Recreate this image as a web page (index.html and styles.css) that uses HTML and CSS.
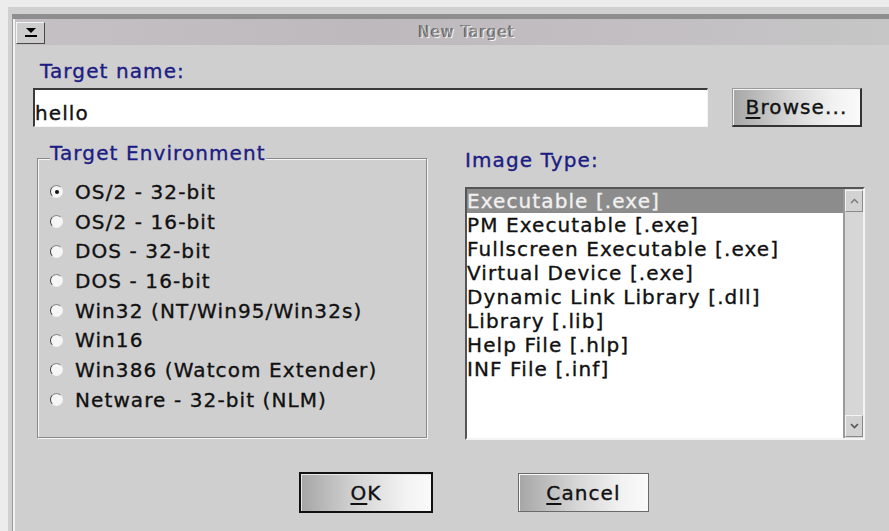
FILE: index.html
```html
<!DOCTYPE html>
<html lang="en">
<head>
<meta charset="utf-8">
<title>New Target</title>
<link rel="stylesheet" href="styles.css">
</head>
<body>
<div class="window">
  <div class="frame">
    <div class="inner">
      <div class="titlebar">
        <button class="sysmenu" aria-label="System menu">
          <svg width="14" height="10" viewBox="0 0 14 10"><polygon points="2,0 12,0 7,5" fill="#000"/><rect x="1" y="7" width="12" height="2" fill="#000"/></svg>
        </button>
        <div class="title">New Target</div>
      </div>
      <div class="client">
        <div class="field-label name-label">Target name:</div>
        <div class="input-row">
          <div class="textbox">hello</div>
          <button class="btn browse"><u>B</u>rowse...</button>
        </div>
        <div class="main-row">
          <fieldset class="group">
            <legend>Target Environment</legend>
            <label class="radio"><span class="dot checked"></span>OS/2 - 32-bit</label>
            <label class="radio"><span class="dot"></span>OS/2 - 16-bit</label>
            <label class="radio"><span class="dot"></span>DOS - 32-bit</label>
            <label class="radio"><span class="dot"></span>DOS - 16-bit</label>
            <label class="radio"><span class="dot"></span>Win32 (NT/Win95/Win32s)</label>
            <label class="radio"><span class="dot"></span>Win16</label>
            <label class="radio"><span class="dot"></span>Win386 (Watcom Extender)</label>
            <label class="radio"><span class="dot"></span>Netware - 32-bit (NLM)</label>
          </fieldset>
          <div class="image-col">
            <div class="field-label">Image Type:</div>
            <div class="listbox">
              <ul class="items">
                <li class="selected">Executable [.exe]</li>
                <li>PM Executable [.exe]</li>
                <li>Fullscreen Executable [.exe]</li>
                <li>Virtual Device [.exe]</li>
                <li>Dynamic Link Library [.dll]</li>
                <li>Library [.lib]</li>
                <li>Help File [.hlp]</li>
                <li>INF File [.inf]</li>
              </ul>
              <div class="scrollbar">
                <div class="sb-btn"><svg width="9" height="6" viewBox="0 0 9 6"><polyline points="1,5 4.5,1.5 8,5" fill="none" stroke="#777" stroke-width="1.4"/></svg></div>
                <div class="sb-btn"><svg width="9" height="6" viewBox="0 0 9 6"><polyline points="1,1 4.5,4.5 8,1" fill="none" stroke="#555" stroke-width="1.6"/></svg></div>
              </div>
            </div>
          </div>
        </div>
        <div class="button-row">
          <button class="btn ok"><u>O</u>K</button>
          <button class="btn cancel"><u>C</u>ancel</button>
        </div>
      </div>
    </div>
  </div>
</div>
</body>
</html>
```
FILE: styles.css
```css
html, body {
  margin: 0;
  height: 100%;
  overflow: hidden;
  background: #ececec;
}

body {
  font-family: "DejaVu Sans", "Liberation Sans", sans-serif;
  font-size: 20px;
  letter-spacing: 1.1px;
  color: #111;
  -webkit-text-stroke: 0.35px currentColor;
}

/* outer window frame */
.window {
  margin: 7px 0 0 8px;
  height: 524px;
  box-sizing: border-box;
  background: #d0d0d0;
  padding: 7px 0 0 4px;
}

.frame {
  height: 100%;
  box-sizing: border-box;
  border-top: 5px solid #8e8e8e;
  border-left: 1px solid #9a9a9a;
}

.inner {
  height: 100%;
  box-sizing: border-box;
  border-left: 2px solid #f2f2f2;
  background: #cfcfcf;
}

/* title bar */
.titlebar {
  height: 26px;
  display: flex;
  align-items: center;
  background: linear-gradient(to right, #c4c0c4, #bdb9bd 40%, #c2bec2 70%, #c6c6c6);
}

.sysmenu {
  width: 29px;
  height: 22px;
  margin: 1px 0 0 1px;
  padding: 0;
  display: flex;
  align-items: center;
  justify-content: center;
  background: #cdcdcd;
  border: 1px solid;
  border-color: #f4f4f4 #4a4a4a #4a4a4a #f4f4f4;
}

.title {
  flex: 1;
  text-align: center;
  font-size: 15px;
  letter-spacing: 1.3px;
  color: #8a8a8a;
  -webkit-text-stroke: 0;
  text-shadow: 1px 1px 0 #f6f6f6, -1px 0 0 #5a5a5a;
}

/* dialog client area */
.client {
  padding-left: 18px;
}

.field-label {
  color: #1c1c84;
  line-height: 24px;
}

.name-label {
  margin: 14px 0 0 7px;
}

.input-row {
  display: flex;
  margin-top: 5px;
}

.textbox {
  width: 675px;
  height: 39px;
  box-sizing: border-box;
  background: #fff;
  border-style: solid;
  border-width: 2px 1px 1px 2px;
  border-color: #3a3a3a #f4f4f4 #f4f4f4 #3a3a3a;
  display: flex;
  align-items: flex-end;
  line-height: 24px;
  padding-bottom: 1px;
}

.btn {
  font: inherit;
  letter-spacing: inherit;
  color: #111;
  padding: 0;
  background: linear-gradient(to right, #a6a6a6, #d6d6d6 45%, #f2f2f2 80%, #fafafa);
}

.btn u {
  text-decoration-thickness: 1.5px;
  text-underline-offset: 3px;
}

.browse {
  margin-left: 24px;
  width: 130px;
  height: 39px;
  border-style: solid;
  border-width: 1px 2px 2px 1px;
  border-color: #9a9a9a #333 #333 #9a9a9a;
  box-shadow: inset 1px 1px 0 #f4f4f4;
}

/* main area */
.main-row {
  display: flex;
  align-items: flex-start;
  margin-top: 14px;
}

.group {
  margin: 0 0 0 4px;
  width: 390px;
  box-sizing: border-box;
  padding: 2px 0 22px 12px;
  border: 1px solid #8a8a8a;
  box-shadow: inset 1px 1px 0 #f6f6f6, 1px 1px 0 #f6f6f6;
  min-width: 0;
}

.group legend {
  padding: 0 0 10px;
  line-height: 24px;
  color: #1c1c84;
  background: #cfcfcf;
}

.radio {
  display: flex;
  align-items: center;
  height: 29.7px;
}

.dot {
  width: 11px;
  height: 11px;
  margin-right: 12px;
  flex: none;
  border-radius: 50%;
  background: #f6f6f6;
  border: 1px solid;
  border-color: #8a8a8a #f2f2f2 #f2f2f2 #3a3a3a;
  display: flex;
  align-items: center;
  justify-content: center;
}

.dot.checked::after {
  content: "";
  width: 4px;
  height: 4px;
  border-radius: 50%;
  background: #111;
}

.image-col {
  margin-left: 38px;
  margin-top: 7px;
  display: flex;
  flex-direction: column;
}

.listbox {
  margin-top: 15px;
  width: 400px;
  height: 253px;
  box-sizing: border-box;
  display: flex;
  border-style: solid;
  border-width: 2px;
  border-color: #555 #f4f4f4 #f4f4f4 #555;
}

.items {
  flex: 1;
  margin: 0;
  padding: 0;
  list-style: none;
  background: #fff;
}

.items li {
  height: 24px;
  line-height: 24px;
  padding-left: 0;
  white-space: nowrap;
}

.items li.selected {
  background: #8c8c8c;
  color: #f0f0f0;
}

.scrollbar {
  width: 18px;
  border-left: 2px solid #9a9a9a;
  background: #d6d6d6;
  display: flex;
  flex-direction: column;
  justify-content: space-between;
  padding: 1px 0 1px;
}

.sb-btn {
  height: 22px;
  box-sizing: border-box;
  display: flex;
  align-items: center;
  justify-content: center;
  background: #d2d2d2;
  border: 1px solid;
  border-color: #f4f4f4 #8a8a8a #8a8a8a #f4f4f4;
}

/* dialog buttons */
.button-row {
  display: flex;
  align-items: center;
  padding-left: 266px;
  margin-top: 32px;
}

.ok {
  width: 134px;
  height: 41px;
  border: 2px solid #111;
  box-shadow: inset 1px 1px 0 #e8e8e8;
}

.cancel {
  margin-left: 85px;
  width: 131px;
  height: 39px;
  border: 1px solid #6a6a6a;
  box-shadow: inset 1px 1px 0 #fafafa;
}
```
